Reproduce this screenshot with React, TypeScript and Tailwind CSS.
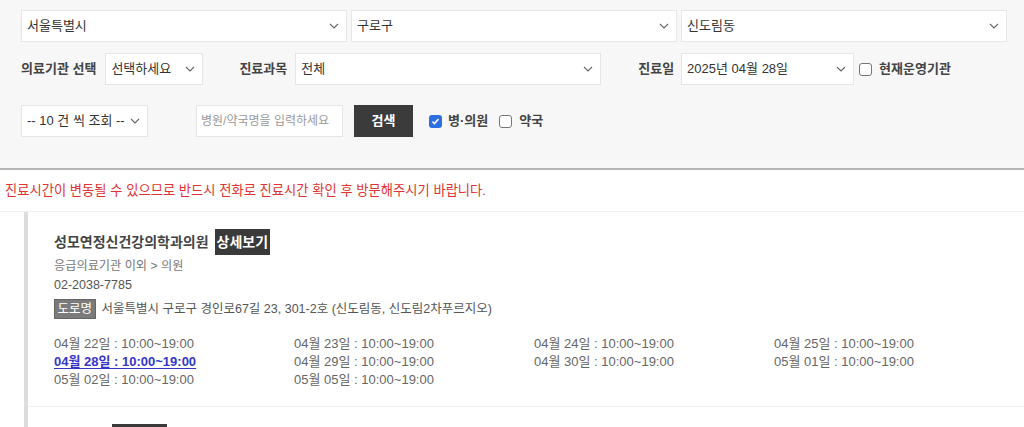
import React from "react";

const Chevron = () => (
  <svg width="10" height="6" viewBox="0 0 10 6" className="shrink-0">
    <path d="M1 1l4 4 4-4" fill="none" stroke="#666" strokeWidth="1.1" />
  </svg>
);

function FakeSelect({ value, className = "" }: { value: string; className?: string }) {
  return (
    <div
      className={`flex h-[32px] items-center justify-between border border-[#e6e6e6] bg-white pl-[5px] pr-[7px] text-[13px] text-[#333] ${className}`}
    >
      <span>{value}</span>
      <Chevron />
    </div>
  );
}

function Box({ checked = false }: { checked?: boolean }) {
  if (checked) {
    return (
      <span className="flex h-[13px] w-[13px] shrink-0 items-center justify-center rounded-[3px] bg-[#2d6fe3]">
        <svg width="9" height="9" viewBox="0 0 9 9">
          <path d="M1.5 4.6l2 2 4-4.6" fill="none" stroke="#fff" strokeWidth="1.6" />
        </svg>
      </span>
    );
  }
  return <span className="block h-[13px] w-[13px] shrink-0 rounded-[3px] border border-[#777] bg-white" />;
}

const schedule = [
  { d: "04월 22일 : 10:00~19:00" },
  { d: "04월 23일 : 10:00~19:00" },
  { d: "04월 24일 : 10:00~19:00" },
  { d: "04월 25일 : 10:00~19:00" },
  { d: "04월 28일 : 10:00~19:00", today: true },
  { d: "04월 29일 : 10:00~19:00" },
  { d: "04월 30일 : 10:00~19:00" },
  { d: "05월 01일 : 10:00~19:00" },
  { d: "05월 02일 : 10:00~19:00" },
  { d: "05월 05일 : 10:00~19:00" },
];

export default function App() {
  return (
    <div className="min-h-[427px] bg-white font-['Liberation_Sans','Noto_Sans_CJK_KR',sans-serif] text-[#333]">
      {/* search panel */}
      <div className="border-b-2 border-[#b5b5b5] bg-[#f7f7f7] pb-[31px] pl-[21px] pr-[17px] pt-[10px]">
        <div className="grid grid-cols-3 gap-[4px]">
          <FakeSelect value="서울특별시" />
          <FakeSelect value="구로구" />
          <FakeSelect value="신도림동" />
        </div>

        <div className="mt-[11px] flex items-center text-[13px] text-[#444]">
          <span className="font-bold">의료기관 선택</span>
          <FakeSelect value="선택하세요" className="ml-[9px] w-[98px]" />
          <span className="ml-[36px] font-bold">진료과목</span>
          <FakeSelect value="전체" className="ml-[8px] w-[306px]" />
          <span className="ml-[37px] font-bold">진료일</span>
          <FakeSelect value="2025년 04월 28일" className="ml-[7px] w-[173px]" />
          <span className="ml-[5px]">
            <Box />
          </span>
          <span className="ml-[7px] font-bold">현재운영기관</span>
        </div>

        <div className="mt-[20px] flex items-center text-[13px] text-[#444]">
          <FakeSelect value="-- 10 건 씩 조회 --" className="w-[127px]" />
          <div className="ml-[48px] flex h-[32px] w-[147px] items-center border border-[#e6e6e6] bg-white pl-[4px] text-[12px] text-[#999]">
            병원/약국명을 입력하세요
          </div>
          <button className="ml-[11px] h-[32px] w-[59px] bg-[#3b3b3b] text-[13px] font-bold text-white">
            검색
          </button>
          <span className="ml-[16px]">
            <Box checked />
          </span>
          <span className="ml-[6px] font-bold">병·의원</span>
          <span className="ml-[11px]">
            <Box />
          </span>
          <span className="ml-[7px] font-bold">약국</span>
        </div>
      </div>

      {/* notice */}
      <div className="flex h-[42px] items-center border-b border-[#f0f0f0] px-[5px] text-[13.3px] text-[#e03232]">
        진료시간이 변동될 수 있으므로 반드시 전화로 진료시간 확인 후 방문해주시기 바랍니다.
      </div>

      {/* result list */}
      <div className="ml-[24px] border-l-[4px] border-[#dddddd]">
        <div className="border-b border-[#f0f0f0] pb-[17px] pl-[26px] pt-[17px]">
          <div className="flex h-[26px] items-center">
            <span className="text-[14px] font-bold text-[#444]">성모연정신건강의학과의원</span>
            <span className="ml-[6px] flex h-[26px] items-center bg-[#3a3a3a] px-[2px] text-[14px] font-bold text-white">
              상세보기
            </span>
          </div>
          <div className="mt-[2px] text-[12.2px] leading-[19px] text-[#777]">응급의료기관 이외 &gt; 의원</div>
          <div className="text-[12.5px] leading-[19px] text-[#555]">02-2038-7785</div>
          <div className="mt-[4px] flex items-center text-[12.5px]">
            <span className="flex h-[20px] items-center border border-[#666] bg-[#7b7b7b] px-[2.5px] text-white">
              도로명
            </span>
            <span className="ml-[6px] text-[#555]">서울특별시 구로구 경인로67길 23, 301-2호 (신도림동, 신도림2차푸르지오)</span>
          </div>
          <div className="mt-[16px] grid grid-cols-[repeat(4,240px)] text-[13px] leading-[18px] text-[#666]">
            {schedule.map((s) =>
              s.today ? (
                <span key={s.d} className="font-bold text-[#3535c8] underline underline-offset-2">
                  {s.d}
                </span>
              ) : (
                <span key={s.d}>{s.d}</span>
              )
            )}
          </div>
        </div>

        <div className="pb-[17px] pl-[26px] pt-[17px]">
          <div className="flex h-[26px] items-center">
            <span className="text-[14px] font-bold text-[#444]">연세의원</span>
            <span className="ml-[6px] flex h-[26px] items-center bg-[#3a3a3a] px-[2px] text-[14px] font-bold text-white">
              상세보기
            </span>
          </div>
          <div className="mt-[2px] text-[12.2px] leading-[19px] text-[#777]">응급의료기관 이외 &gt; 의원</div>
        </div>
      </div>
    </div>
  );
}
